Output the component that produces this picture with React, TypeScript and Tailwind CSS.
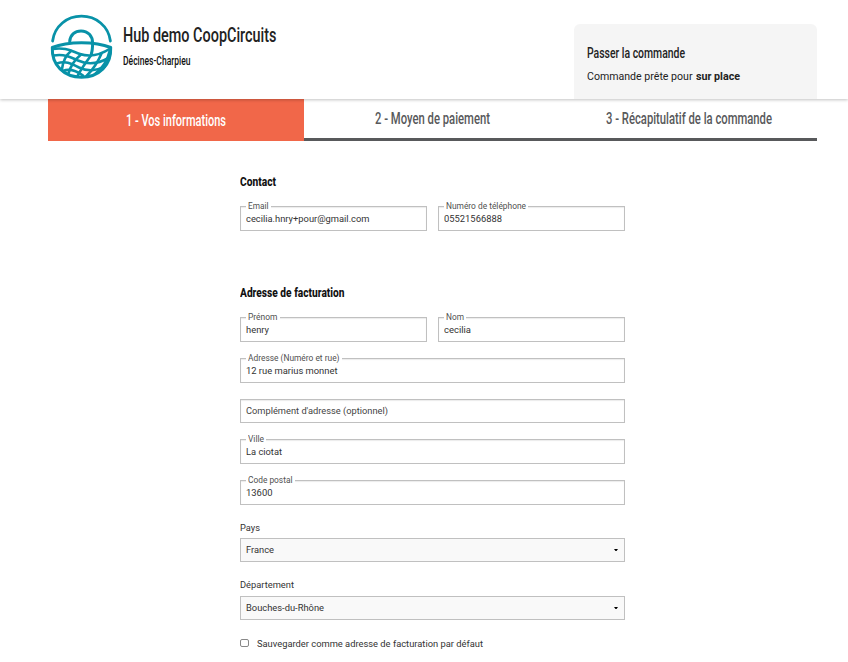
import { useLayoutEffect, useRef, useState } from "react";

type FitProps = { text: string; width: number; className: string };

/** Text squeezed horizontally to a given width, for condensed headings and exact labels. */
function Fit({ text, width, className }: FitProps) {
  const ref = useRef<HTMLSpanElement>(null);
  const [scale, setScale] = useState(1);
  useLayoutEffect(() => {
    if (ref.current) setScale(width / ref.current.getBoundingClientRect().width);
  }, []);
  return (
    <span className="flex whitespace-nowrap" style={{ width }}>
      <span
        ref={ref}
        className={"shrink-0 origin-left " + className}
        style={{ transform: `scaleX(${scale})` }}
      >
        {text}
      </span>
    </span>
  );
}

function Logo() {
  return (
    <svg className="h-[66px] w-[64px] shrink-0" viewBox="0 0 64 66" fill="none" stroke="#0892a8" strokeWidth="2.6" strokeLinecap="round" strokeLinejoin="round">
      <path d="M2.6 27C4.500 12 17 2.200 31.500 2.200S58.500 12 60.400 27" strokeWidth="2.800" />
      <path d="M19.700 27.500C20.300 20.800 25 16.900 31 16.900C38 16.900 42.600 22 42.600 29C42.600 34 42.300 37 41.300 40" strokeWidth="3" />
      <path d="M2.300 33.500C18 27 45 27 60.700 33.500C61.500 51 49 63.200 31.500 63.200S1.500 51 2.300 33.500Z" strokeWidth="3" />
      <path d="M2.800 35C16 33 22 37.500 30 40C41 43.500 51 40.500 60.300 34.500" />
      <path d="M3.600 41.500C14 40 20 42.500 28 46.500C38 51 49 49.500 59.500 43.500" />
      <path d="M6.800 49.500C15 46.500 21 49 29 53.500C37 57.500 47 57 55 52.500" />
      <path d="M13 57C19 54.500 26 56.500 33 61.500" />
      <path d="M21 37C15.500 41.500 13 47 12 55" />
      <path d="M31 40.500C25 45.500 20.500 52 18.500 59.500" />
      <path d="M41.300 41C36.500 47.500 31 55 27.500 62" />
      <path d="M51.500 39.500C48 48 43 55.500 36.500 62" />
      <path d="M59.800 36.500C57.500 46 52.500 54 46 59" />
    </svg>
  );
}

function Field({ label, labelWidth, value, valueWidth }: { label: string; labelWidth: number; value: string; valueWidth: number }) {
  return (
    <div className="relative flex h-[25px] items-center border border-[#c0c0c0] pl-[5.4px] shadow-[inset_0_1px_1px_rgba(0,0,0,0.08)]">
      <span className="absolute -top-[6px] left-[5px] bg-white px-[2.2px]">
        <Fit text={label} width={labelWidth} className="text-[8.5px] leading-[11px] text-[#505050]" />
      </span>
      <Fit text={value} width={valueWidth} className="text-[9.5px] leading-[12px] text-[#333]" />
    </div>
  );
}

function Select({ value, width }: { value: string; width: number }) {
  return (
    <div className="flex h-6 items-center justify-between border border-[#c0c0c0] bg-[#f9f9f9] pr-[6px] pl-[5.4px]">
      <Fit text={value} width={width} className="text-[9.5px] leading-[12px] text-[#333]" />
      <svg className="h-[2px] w-1" viewBox="0 0 4 2"><path d="M0 0h4L2.500 2h-1z" fill="#000" /></svg>
    </div>
  );
}

export default function App() {
  return (
    <div className="h-[662px] w-[848px] overflow-hidden bg-white font-['Roboto',sans-serif] text-[#222]">
      <header className="relative h-[99px] bg-white shadow-[0_1px_3px_rgba(0,0,0,0.24)]">
        <div className="flex h-full justify-between pr-[31px] pl-[50px]">
          <div className="flex pt-[14px]">
            <Logo />
            <div className="pt-[8px] pl-[8.6px]">
              <Fit text="Hub demo CoopCircuits" width={153.5} className="text-[20px] leading-[26px] font-medium" />
              <div className="pt-[6px]">
                <Fit text="Décines-Charpieu" width={67.5} className="text-[12.5px] leading-[14px] font-medium text-[#111]" />
              </div>
            </div>
          </div>
          <div className="mt-6 w-[243px] rounded-t-[6px] bg-[#f5f5f5] pt-[19px] pl-[13.4px]">
            <Fit text="Passer la commande" width={98} className="text-[15.5px] leading-[20px] font-medium" />
            <div className="flex gap-[3px] pt-[7px]">
              <Fit text="Commande prête pour" width={105.5} className="text-[11px] leading-[14px]" />
              <Fit text="sur place" width={44} className="text-[11px] leading-[14px] font-bold" />
            </div>
          </div>
        </div>
      </header>
      <nav className="flex h-[42px] pr-[31px] pl-12">
        <div className="flex w-64 items-center justify-center bg-[#f16749] pt-px">
          <Fit text="1 - Vos informations" width={100} className="text-[16px] leading-[20px] font-medium text-white" />
        </div>
        <div className="flex w-64 items-center justify-center border-b-[3px] border-[#58595b]">
          <Fit text="2 - Moyen de paiement" width={115} className="text-[16px] leading-[20px] font-medium text-[#58595b]" />
        </div>
        <div className="flex flex-1 items-center justify-center border-b-[3px] border-[#58595b]">
          <Fit text="3 - Récapitulatif de la commande" width={166} className="text-[16px] leading-[20px] font-medium text-[#58595b]" />
        </div>
      </nav>
      <main className="ml-[240px] w-[385px] pt-[33px]">
        <Fit text="Contact" width={36} className="text-[13px] leading-[16px] font-extrabold text-[#111]" />
        <div className="mt-4 grid grid-cols-2 gap-[11px]">
          <Field label="Email" labelWidth={20.5} value="cecilia.hnry+pour@gmail.com" valueWidth={123.5} />
          <Field label="Numéro de téléphone" labelWidth={80} value="05521566888" valueWidth={58} />
        </div>
        <div className="mt-[54px]">
          <Fit text="Adresse de facturation" width={104.5} className="text-[13px] leading-[16px] font-extrabold text-[#111]" />
        </div>
        <div className="mt-4 grid grid-cols-2 gap-[11px]">
          <Field label="Prénom" labelWidth={29.5} value="henry" valueWidth={23} />
          <Field label="Nom" labelWidth={18} value="cecilia" valueWidth={27} />
        </div>
        <div className="flex flex-col gap-4 pt-4">
          <Field label="Adresse (Numéro et rue)" labelWidth={91.5} value="12 rue marius monnet" valueWidth={91.5} />
          <div className="flex h-6 items-center border border-[#c0c0c0] pl-[5.4px] shadow-[inset_0_1px_1px_rgba(0,0,0,0.08)]">
            <Fit text="Complément d'adresse (optionnel)" width={142} className="text-[9.5px] leading-[12px] text-[#444]" />
          </div>
          <Field label="Ville" labelWidth={16} value="La ciotat" valueWidth={36} />
          <Field label="Code postal" labelWidth={44.5} value="13600" valueWidth={26.5} />
        </div>
        <div className="mt-[17px] mb-1">
          <Fit text="Pays" width={20} className="text-[9.5px] leading-[12px] text-[#333]" />
        </div>
        <Select value="France" width={28} />
        <div className="mt-[17px] mb-[5px]">
          <Fit text="Département" width={54} className="text-[9.5px] leading-[12px] text-[#333]" />
        </div>
        <Select value="Bouches-du-Rhône" width={78} />
        <div className="mt-[18px] flex gap-2">
          <span className="mt-px h-2 w-[8.500px] rounded-[2px] border border-[#888] bg-white" />
          <Fit text="Sauvegarder comme adresse de facturation par défaut" width={226} className="text-[9.5px] leading-[12px] text-[#333]" />
        </div>
      </main>
    </div>
  );
}
